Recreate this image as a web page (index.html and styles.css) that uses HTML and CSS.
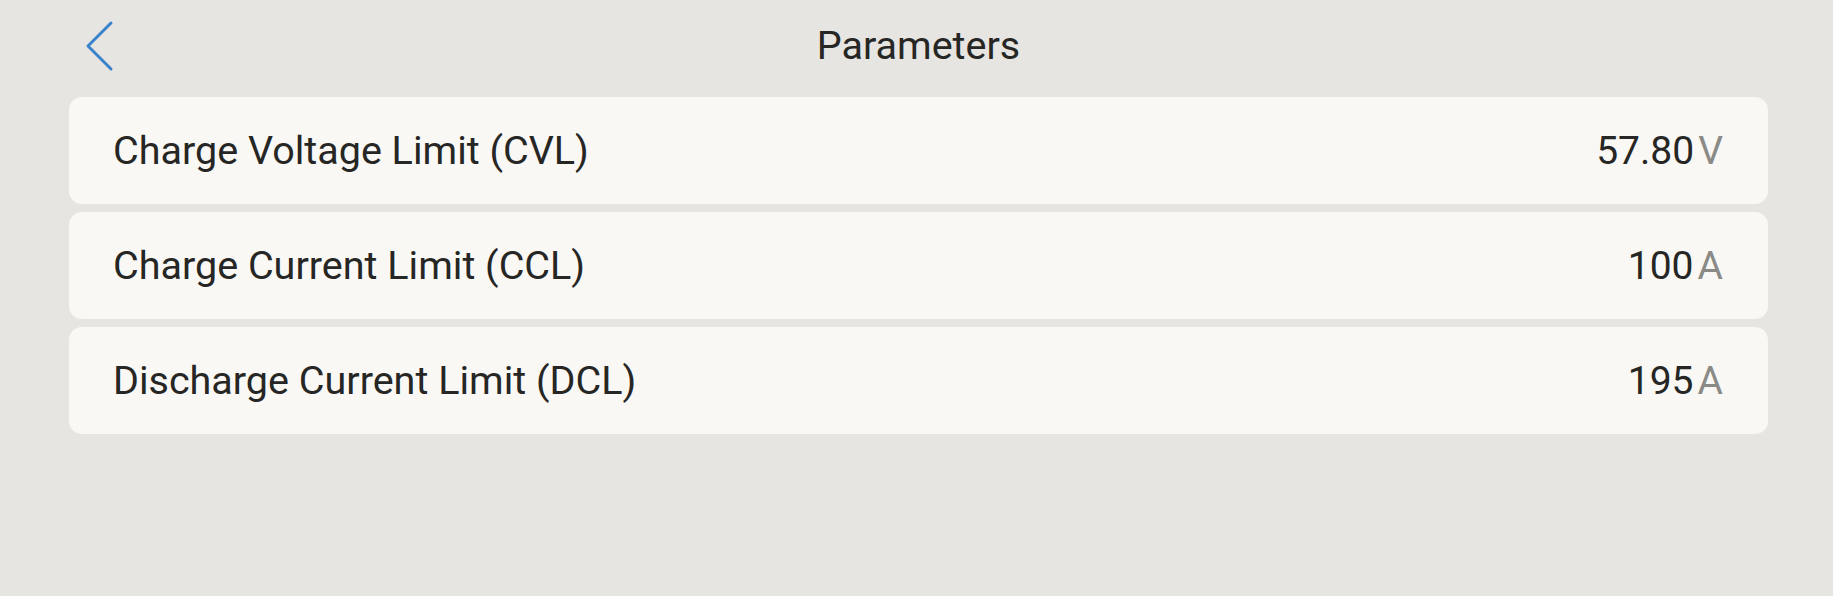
FILE: index.html
```html
<!DOCTYPE html>
<html>
<head>
<meta charset="utf-8">
<link rel="stylesheet" href="styles.css">
</head>
<body>
<div class="page">
  <header class="header">
    <button class="back" aria-label="Back">
      <svg width="30" height="52" viewBox="0 0 30 52"><path d="M26 3 L3 26 L26 49" fill="none" stroke="#3a83cc" stroke-width="3" stroke-linecap="round" stroke-linejoin="round"/></svg>
    </button>
    <h1 class="title">Parameters</h1>
  </header>
  <div class="list">
    <div class="row"><span class="label">Charge Voltage Limit (CVL)</span><span class="value">57.80<span class="unit">V</span></span></div>
    <div class="row"><span class="label">Charge Current Limit (CCL)</span><span class="value">100<span class="unit">A</span></span></div>
    <div class="row"><span class="label">Discharge Current Limit (DCL)</span><span class="value">195<span class="unit">A</span></span></div>
  </div>
</div>
</body>
</html>
```
FILE: styles.css
```css
html, body {
  margin: 0;
  padding: 0;
  background: #e6e5e1;
  font-family: Roboto, "Liberation Sans", sans-serif;
  color: #262624;
}
.page {
  width: 1833px;
  height: 596px;
  padding: 0 65px 0 69px;
  box-sizing: border-box;
}
.header {
  height: 97px;
  display: flex;
  align-items: center;
  justify-content: center;
  position: relative;
}
.back {
  position: absolute;
  left: 16px;
  top: 20px;
  background: none;
  border: none;
  padding: 0;
  cursor: pointer;
}
.title {
  margin: 0;
  font-size: 39.5px;
  font-weight: 400;
  margin-top: -6px;
}
.list {
  display: flex;
  flex-direction: column;
  gap: 8px;
}
.row {
  height: 107px;
  background: #f9f8f5;
  border-radius: 13px;
  display: flex;
  align-items: center;
  justify-content: space-between;
  padding: 0 45px 0 44px;
  font-size: 39.5px;
}
.value {
  display: flex;
  gap: 4px;
  font-size: 39px;
}
.unit {
  color: #8a8a87;
}
```
